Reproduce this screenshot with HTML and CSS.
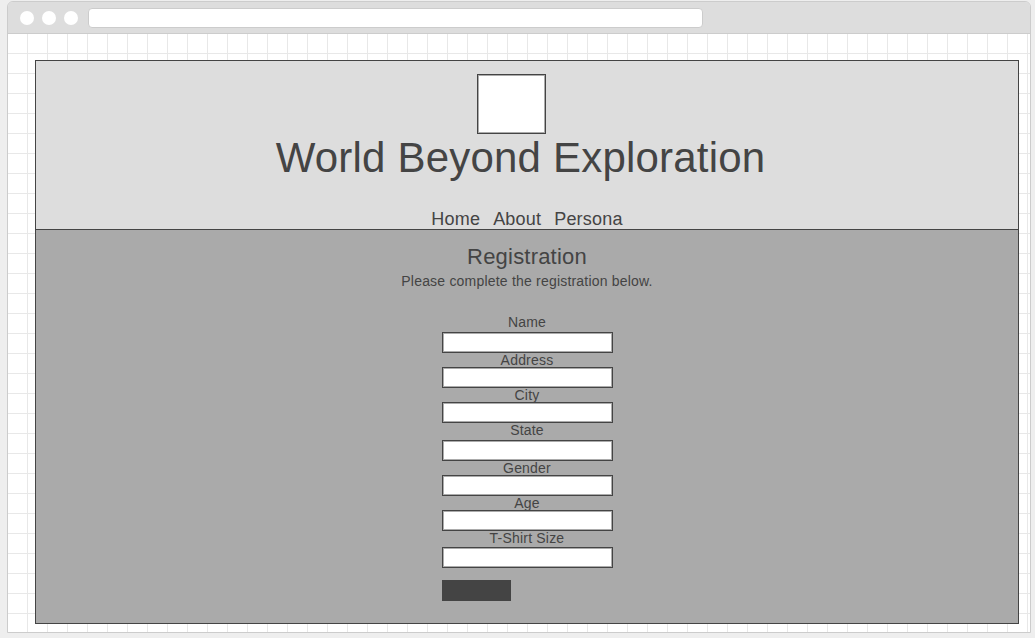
FILE: index.html
```html
<!DOCTYPE html>
<html lang="en">
<head>
<meta charset="utf-8">
<title>World Beyond Exploration - Registration</title>
<link rel="stylesheet" href="styles.css">
</head>
<body>
<div class="window">
  <div class="titlebar">
    <span class="dot"></span>
    <span class="dot"></span>
    <span class="dot"></span>
    <div class="urlbar"></div>
  </div>
  <div class="viewport">
    <div class="page">
      <header class="site-header">
        <div class="logo"></div>
        <h1 class="site-title">World Beyond Exploration</h1>
        <nav class="site-nav">
          <a class="nav-link">Home</a>
          <a class="nav-link">About</a>
          <a class="nav-link">Persona</a>
        </nav>
      </header>
      <main class="content">
        <h2 class="content-title">Registration</h2>
        <p class="content-intro">Please complete the registration below.</p>
        <form class="reg-form">
          <div class="field"><label class="field-label field-label--loose">Name</label><input class="field-input" type="text"></div>
          <div class="field"><label class="field-label">Address</label><input class="field-input" type="text"></div>
          <div class="field"><label class="field-label">City</label><input class="field-input" type="text"></div>
          <div class="field"><label class="field-label field-label--loose">State</label><input class="field-input" type="text"></div>
          <div class="field"><label class="field-label">Gender</label><input class="field-input" type="text"></div>
          <div class="field"><label class="field-label">Age</label><input class="field-input" type="text"></div>
          <div class="field"><label class="field-label field-label--mid">T-Shirt Size</label><input class="field-input" type="text"></div>
          <button class="submit-btn" type="button"></button>
        </form>
      </main>
    </div>
  </div>
</div>
</body>
</html>
```

FILE: styles.css
```css
html, body {
  margin: 0;
  padding: 0;
}

body {
  width: 1035px;
  height: 638px;
  overflow: hidden;
  background: #eeeeee;
  font-family: "Liberation Sans", Arial, sans-serif;
  letter-spacing: 0.2px;
  color: #444444;
}

.window {
  box-sizing: border-box;
  width: 1024px;
  height: 632px;
  margin: 1px 0 0 7px;
  border: 1px solid #cccccc;
  border-radius: 6px 6px 0 0;
  display: flex;
  flex-direction: column;
  overflow: hidden;
}

.titlebar {
  box-sizing: border-box;
  height: 32px;
  padding: 1px 0 0 12px;
  background: #dddddd;
  border-bottom: 1px solid #cccccc;
  display: flex;
  align-items: center;
  gap: 8px;
  flex-shrink: 0;
}

.dot {
  width: 14px;
  height: 14px;
  border-radius: 50%;
  background: #ffffff;
}

.urlbar {
  box-sizing: border-box;
  width: 615px;
  height: 20px;
  margin-left: 2px;
  background: #ffffff;
  border: 1px solid #cccccc;
  border-radius: 4px;
}

.viewport {
  flex: 1;
  display: flex;
  padding: 26px 11px 8px 27px;
  background-color: #ffffff;
  background-image:
    linear-gradient(to right, transparent 19px, #e8e8e8 19px),
    linear-gradient(to bottom, transparent 19px, #e8e8e8 19px);
  background-size: 20px 20px;
}

.page {
  flex: 1;
  display: flex;
  flex-direction: column;
  border: 1px solid #444444;
  background: #aaaaaa;
}

.site-header {
  display: flex;
  flex-direction: column;
  align-items: center;
  padding-top: 13px;
  background: #dddddd;
  border-bottom: 1px solid #444444;
}

.logo {
  box-sizing: border-box;
  width: 69px;
  height: 60px;
  margin-right: 31px;
  border: 1px solid #444444;
  box-shadow: inset 0 0 0 1px rgba(68, 68, 68, 0.45);
  background: #ffffff;
}

.site-title {
  margin: 0;
  padding-right: 13px;
  font-size: 42px;
  line-height: 48px;
  font-weight: normal;
  color: #444444;
}

.site-nav {
  display: flex;
  gap: 13px;
  margin-top: 27px;
  font-size: 18px;
  line-height: 20px;
}

.nav-link {
  color: #444444;
  text-decoration: none;
}

.content {
  display: flex;
  flex-direction: column;
  align-items: center;
  padding-top: 14px;
  text-align: center;
}

.content-title {
  margin: 0;
  font-size: 22px;
  line-height: 25px;
  font-weight: normal;
  color: #444444;
}

.content-intro {
  margin: 4px 0 0;
  font-size: 14px;
  line-height: 16px;
}

.reg-form {
  width: 171px;
  margin: 26px 0 0;
  display: flex;
  flex-direction: column;
}

.field {
  display: flex;
  flex-direction: column;
}

.field-label {
  display: block;
  font-size: 14px;
  line-height: 14px;
  text-align: center;
  color: #444444;
}

.field-label--loose {
  margin-bottom: 3px;
}

.field-label--mid {
  margin-bottom: 2px;
}

.field-input {
  display: block;
  box-sizing: border-box;
  width: 171px;
  height: 21px;
  margin: 0;
  padding: 0;
  border: 1px solid #444444;
  box-shadow: inset 0 0 0 1px rgba(68, 68, 68, 0.45);
  border-radius: 0;
  background: #ffffff;
  outline: none;
}

.submit-btn {
  display: block;
  width: 69px;
  height: 21px;
  margin-top: 12px;
  padding: 0;
  border: 0;
  border-radius: 0;
  background: #444444;
}
```
